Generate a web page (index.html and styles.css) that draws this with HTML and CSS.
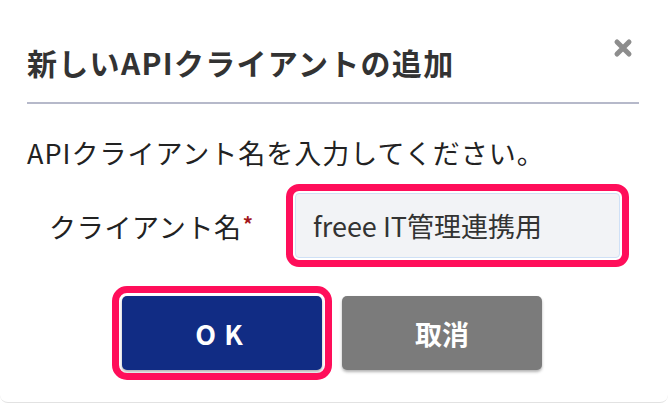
FILE: index.html
```html
<!DOCTYPE html>
<html lang="ja">
<head>
<meta charset="utf-8">
<title>新しいAPIクライアントの追加</title>
<link rel="stylesheet" href="styles.css">
</head>
<body>
<div class="dialog">
  <header class="dialog-header">
    <h1 class="dialog-title">新しいAPIクライアントの追加</h1>
    <button class="close-btn" type="button" aria-label="閉じる">
      <svg width="20" height="20" viewBox="0 0 20 20" aria-hidden="true">
        <path d="M4 4 L16 16 M16 4 L4 16" stroke="#8d8d8d" stroke-width="5" stroke-linecap="round" fill="none"/>
      </svg>
    </button>
  </header>
  <div class="dialog-body">
    <p class="lead">APIクライアント名を入力してください。</p>
    <div class="form-row">
      <label class="field-label" for="client-name">クライアント名<span class="req">*</span></label>
      <input id="client-name" class="text-input highlight" type="text" value="freee IT管理連携用">
    </div>
    <div class="actions">
      <button class="btn btn-primary highlight-btn" type="button">OK</button>
      <button class="btn btn-secondary" type="button">取消</button>
    </div>
  </div>
</div>
</body>
</html>
```

FILE: styles.css
```css
html, body {
  margin: 0;
  padding: 0;
  background: #ffffff;
}

body {
  font-family: "Noto Sans CJK JP", "Noto Sans", sans-serif;
  color: #222222;
}

.dialog {
  width: 668px;
  height: 403px;
  box-sizing: border-box;
  border-bottom: 1px solid #e2e2e2;
  border-radius: 0 0 8px 8px;
}

.dialog-header {
  display: flex;
  justify-content: space-between;
  align-items: flex-start;
  margin: 0 29px 0 27px;
  padding-top: 38px;
  padding-bottom: 22px;
  border-bottom: 2px solid #b6b9ca;
}

.dialog-title {
  margin: 6px 0 0 0;
  font-size: 30px;
  line-height: 36px;
  font-weight: 700;
  letter-spacing: 1.3px;
  color: #333333;
}

.close-btn {
  margin: 0 6px 0 0;
  padding: 0;
  border: none;
  background: none;
  width: 20px;
  height: 20px;
  display: block;
}

.close-btn svg {
  display: block;
}

.dialog-body {
  padding: 0 27px;
}

.lead {
  margin: 29px 0 0 0;
  font-size: 27px;
  line-height: 40px;
  letter-spacing: 1px;
  color: #222222;
}

.form-row {
  display: flex;
  align-items: center;
  margin-top: 20px;
}

.field-label {
  flex: 0 0 268px;
  box-sizing: border-box;
  padding-left: 22px;
  font-size: 27px;
  line-height: 40px;
  letter-spacing: 0.7px;
  color: #222222;
}

.req {
  color: #a3161b;
  font-size: 20px;
  font-weight: 700;
  vertical-align: 6px;
  margin-left: 1px;
}

.text-input {
  width: 325px;
  height: 65px;
  box-sizing: border-box;
  margin: 0;
  padding: 0 17px;
  border: 1px solid #cfe0f6;
  border-radius: 4px;
  background: #f2f3f6;
  font-family: "Noto Sans CJK JP", "Noto Sans", sans-serif;
  font-size: 27px;
  color: #333333;
}

.highlight {
  outline: 7px solid #ff0e5a;
  outline-offset: 2px;
}

.actions {
  display: flex;
  gap: 20px;
  margin-top: 38px;
  padding-left: 95px;
}

.btn {
  width: 200px;
  height: 74px;
  border: none;
  border-radius: 5px;
  color: #ffffff;
  font-family: "Noto Sans CJK JP", "Noto Sans", sans-serif;
  font-size: 27px;
  font-weight: 700;
  box-shadow: 0 2px 3px rgba(0, 0, 0, 0.3);
}

.btn-primary {
  background: #112c84;
  letter-spacing: 8px;
  padding-left: 8px;
}

.btn-secondary {
  background: #7b7b7b;
}

.highlight-btn {
  outline: 7px solid #ff0e5a;
  outline-offset: 3px;
}
```
